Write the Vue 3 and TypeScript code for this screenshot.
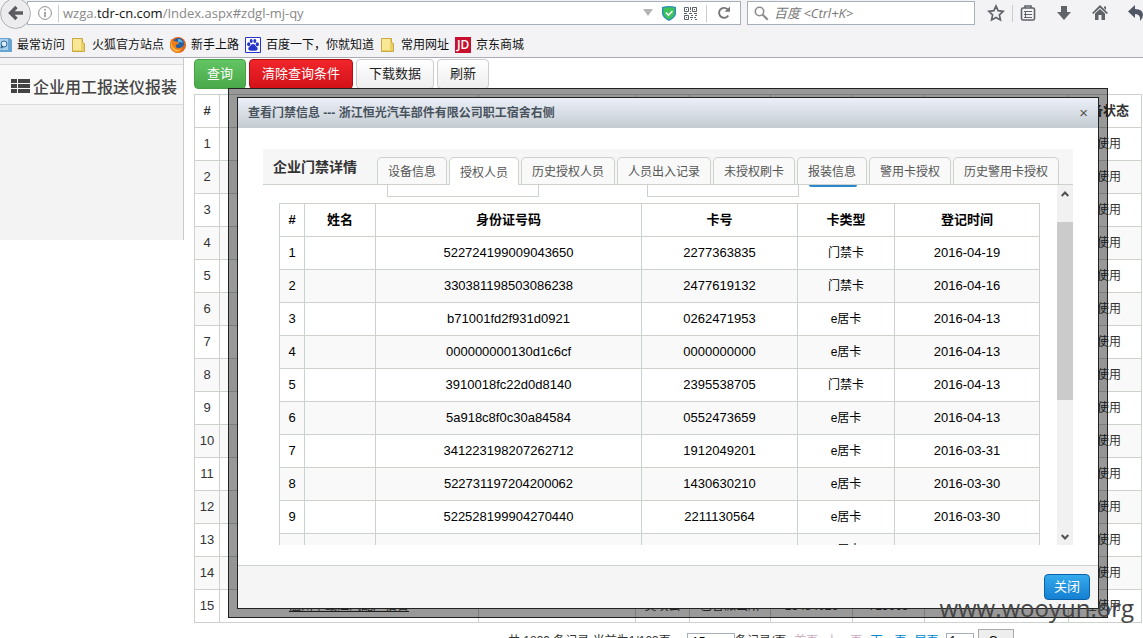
<script setup lang="ts">
interface Member {
  id: string
  card: string
  type: string
  date: string
}

const members: Member[] = [
  { id: '522724199009043650', card: '2277363835', type: '门禁卡', date: '2016-04-19' },
  { id: '330381198503086238', card: '2477619132', type: '门禁卡', date: '2016-04-16' },
  { id: 'b71001fd2f931d0921', card: '0262471953', type: 'e居卡', date: '2016-04-13' },
  { id: '000000000130d1c6cf', card: '0000000000', type: 'e居卡', date: '2016-04-13' },
  { id: '3910018fc22d0d8140', card: '2395538705', type: '门禁卡', date: '2016-04-13' },
  { id: '5a918c8f0c30a84584', card: '0552473659', type: 'e居卡', date: '2016-04-13' },
  { id: '341223198207262712', card: '1912049201', type: 'e居卡', date: '2016-03-31' },
  { id: '522731197204200062', card: '1430630210', type: 'e居卡', date: '2016-03-30' },
  { id: '522528199904270440', card: '2211130564', type: 'e居卡', date: '2016-03-30' },
  { id: '', card: '', type: 'e居卡', date: '' },
]

const tabs: string[] = ['设备信息', '授权人员', '历史授权人员', '人员出入记录', '未授权刷卡', '报装信息', '警用卡授权', '历史警用卡授权']
const activeTab = 1
const deviceRows = 15
</script>

<template>
  <div class="window">
    <header class="chrome">
      <div class="toolbar">
        <button class="back" aria-label="后退">
          <svg width="16" height="16" viewBox="0 0 16 16"><path d="M8.5 2 2.5 8l6 6M3 8h12" fill="none" stroke="#5c5c60" stroke-width="3.4" /></svg>
        </button>
        <div class="address">
          <svg class="info" width="16" height="16" viewBox="0 0 16 16"><circle cx="8" cy="8" r="6.4" fill="none" stroke="#8c8c8c" /><path d="M8 7v5M8 4v1.6" stroke="#8c8c8c" stroke-width="1.5" /></svg>
          <span class="sep"></span>
          <span class="url">wzga.<b>tdr-cn.com</b>/Index.aspx#zdgl-mj-qy</span>
          <svg class="drop" width="10" height="8" viewBox="0 0 10 8"><path d="M0 0h10L5 7z" fill="#b4b4b4" /></svg>
          <svg class="shield" width="14" height="15" viewBox="0 0 14 15"><path d="M0 1q7-2 14 0v7q-1 4-7 7-6-3-7-7z" fill="#2b8fb4" /><path d="M1.500 2q5.500-1.500 11 0v6q-1 3-5.500 5.500Q2.500 11 1.500 8z" fill="#3fc45c" /><path d="m4 6.500 2.500 2.700L10.500 5" fill="none" stroke="#fff" stroke-width="1.600" /></svg>
          <svg class="qr" width="15" height="15" viewBox="0 0 15 15" fill="none" stroke="#5c606a"><path d="M1.500 1.500h4v4h-4zM9.500 1.500h4v4h-4zM1.500 9.500h4v4h-4z" /><path d="M3 3.500h1M11 3.500h1M3 11.500h1M7.500 1v3M7 5.500h1M1 7.500h3M6 7.500h3M11 7.500h3M8 9.500h2M12 9.500h2M7 11.500h3M11 11.500h2M8 13.500h1M12 13.500h2" /></svg>
          <span class="sep reloadsep"></span>
          <svg class="reload" width="14" height="14" viewBox="0 0 14 14"><path d="M11.300 9.500A5 5 0 1 1 10.500 3.200" fill="none" stroke="#77777b" stroke-width="1.900" /><path d="M7.500 5.800H13V.5z" fill="#77777b" /></svg>
        </div>
        <label class="search">
          <svg width="15" height="15" viewBox="0 0 15 15" fill="none" stroke="#8c8c90"><circle cx="5.500" cy="5.500" r="4.200" stroke-width="1.600" /><path d="m8.700 8.700 5 5" stroke-width="2.200" /></svg>
          <input type="text" placeholder="百度 &lt;Ctrl+K&gt;" aria-label="搜索" />
        </label>
        <nav class="tools">
          <svg width="18" height="18" viewBox="0 0 18 18"><path d="m9 2 2.100 4.700 5.100.6-3.800 3.500 1 5.100L9 13.400l-4.400 2.500 1-5.100-3.800-3.500 5.100-.6z" fill="none" stroke="#606368" stroke-width="1.700" /></svg>
          <span class="sep"></span>
          <svg width="18" height="18" viewBox="0 0 18 18" fill="none" stroke="#606368"><rect x="2.500" y="4" width="13" height="12" rx="1.500" stroke-width="1.600" /><path d="M6 4V2h6v2" stroke-width="1.600" /><path d="M5 7.500h8M5 10.500h8M5 13.500h8M6.500 7v7" /></svg>
          <svg width="18" height="18" viewBox="0 0 18 18"><path d="M6 2h6v6h4l-7 8-7-8h4z" fill="#606368" /></svg>
          <svg width="18" height="18" viewBox="0 0 18 18" fill="#606368"><path d="m9 1 8 8-1.300 1L9 3.800 2.300 10 1 9z" /><path d="M13 2.500h2V6l-2-2zM4 9.500 9 5l5 4.500V16h-3.500v-5h-3v5H4z" /></svg>
          <svg width="18" height="18" viewBox="0 0 18 18"><path d="M8 1v4q8 0 8 6 0 3-3 6 1-7-5-7v4L1 7.500z" fill="#505664" /></svg>
        </nav>
      </div>
      <nav class="bookmarks">
        <a href="#"><svg class="recent" width="12" height="16" viewBox="0 0 12 16"><path d="M0 1h10l2 2v12H0z" fill="#67a4d2" /><path d="M0 2h8v11H0z" fill="#a6d1ed" /><circle cx="4" cy="7" r="3" fill="#d8effb" stroke="#33668e" /><path d="m1 11 2-2" stroke="#33668e" stroke-width="2" /></svg>最常访问</a>
        <a href="#"><svg width="16" height="16" viewBox="0 0 16 16"><path d="M1.500 1.500h10v4l2 1v8h-12z" fill="#e9cf66" stroke="#c9a944" /><path d="M2 2h8v11H2z" fill="#f8e795" /></svg>火狐官方站点</a>
        <a href="#"><svg width="16" height="16" viewBox="0 0 16 16"><circle cx="8" cy="8" r="8" fill="#dd641c" /><circle cx="8.500" cy="6.500" r="5.500" fill="#245ea5" /><path d="M8 2q4 0 5 4-3-2-5 0z" fill="#59b7e3" /><path d="M1 2q1 2 3 2 4 0 5 3-4 0-3 3 3 3 7-1-1 7-6 7Q0 14 0 8z" fill="#ed7c1b" /><path d="M1 4q1 8 7 9l3-1q-2 4-7 2Q0 10 1 4z" fill="#f9b83a" /></svg>新手上路</a>
        <a href="#"><svg width="16" height="16" viewBox="0 0 16 16"><path d="M.5.5h15v15H.5z" fill="#fff" stroke="#2633c8" /><g fill="#2633c8"><ellipse cx="3.700" cy="7.300" rx="1.600" ry="2" /><ellipse cx="6.200" cy="4" rx="1.500" ry="2.100" /><ellipse cx="9.800" cy="4" rx="1.500" ry="2.100" /><ellipse cx="12.300" cy="7.300" rx="1.600" ry="2" /><path d="M8 7q2 0 2.700 2 2.300 1.500 2 3.200-.7 2-4.700 1.500-4 .5-4.700-1.500-.3-1.700 2-3.200Q6 7 8 7z" /></g></svg>百度一下，你就知道</a>
        <a href="#"><svg width="16" height="16" viewBox="0 0 16 16"><path d="M1.500 1.500h10v4l2 1v8h-12z" fill="#e9cf66" stroke="#c9a944" /><path d="M2 2h8v11H2z" fill="#f8e795" /></svg>常用网址</a>
        <a href="#"><span class="jd">JD</span>京东商城</a>
      </nav>
    </header>

    <div class="page">
      <aside class="sidebar">
        <a class="side-item" href="#">
          <svg width="20" height="14" viewBox="0 0 20 14" fill="#444"><path d="M0 0h6v4H0zM7 0h12v4H7zM0 5h6v4H0zM7 5h12v4H7zM0 10h6v4H0zM7 10h12v4H7z" /></svg>
          <span>企业用工报送仪报装</span>
        </a>
      </aside>
      <main class="content">
        <div class="actions">
          <button class="btn green">查询</button>
          <button class="btn red">清除查询条件</button>
          <button class="btn">下载数据</button>
          <button class="btn">刷新</button>
        </div>
        <table class="grid devices">
          <colgroup><col class="d-no" /><col class="d-name" /><col class="d-addr" /><col class="d-user" /><col class="d-station" /><col class="d-tel" /><col class="d-short" /><col /><col class="d-state" /></colgroup>
          <thead><tr><th>#</th><th></th><th></th><th></th><th></th><th></th><th></th><th></th><th class="state">设备状态</th></tr></thead>
          <tbody>
            <tr v-for="n in deviceRows" :key="n">
              <td>{{ n }}</td>
              <td><a v-if="n === deviceRows" class="device" href="#">温州市瓯江汽配厂宿舍</a></td>
              <td></td>
              <td><span v-if="n === deviceRows">吴瑛云</span></td>
              <td><span v-if="n === deviceRows">巴曹派出所</span></td>
              <td><span v-if="n === deviceRows">13484026</span></td>
              <td><span v-if="n === deviceRows">713668</span></td>
              <td></td>
              <td class="state">在使用</td>
            </tr>
          </tbody>
        </table>
        <div class="pager">
          <span class="total">共 1839 条记录 当前为1/123页</span>
          <label class="size"><select aria-label="每页记录数"><option>15</option></select>条记录/页</label>
          <a class="off" href="#">首页</a>
          <a class="off" href="#">上一页</a>
          <a href="#">下一页</a>
          <a href="#">尾页</a>
          <span class="jump"><input type="text" value="1" aria-label="页码" /><button>Go</button></span>
        </div>
      </main>
    </div>

    <div class="frame" role="dialog" aria-labelledby="dialog-title">
      <section class="dialog">
        <header class="dialog-head">
          <h1 id="dialog-title">查看门禁信息 --- 浙江恒光汽车部件有限公司职工宿舍右侧</h1>
          <button class="close" aria-label="关闭窗口">×</button>
        </header>
        <div class="dialog-body">
          <div class="tabbar">
            <h2>企业门禁详情</h2>
            <div class="tabs" role="tablist">
              <button v-for="(tab, i) in tabs" :key="tab" class="tab" :class="{ active: i === activeTab }" role="tab" :aria-selected="i === activeTab">{{ tab }}</button>
            </div>
          </div>
          <div class="pane">
            <div class="pane-main">
              <form class="filters">
                <input type="text" aria-label="姓名" />
                <input type="text" aria-label="卡号" />
                <button type="button" aria-label="查询人员"></button>
              </form>
              <table class="grid members">
                <colgroup><col class="m-no" /><col class="m-name" /><col class="m-id" /><col class="m-card" /><col class="m-type" /><col class="m-date" /></colgroup>
                <thead><tr><th>#</th><th>姓名</th><th>身份证号码</th><th>卡号</th><th>卡类型</th><th>登记时间</th></tr></thead>
                <tbody>
                  <tr v-for="(m, i) in members" :key="i">
                    <td>{{ i < 9 ? i + 1 : '' }}</td>
                    <td></td>
                    <td>{{ m.id }}</td>
                    <td>{{ m.card }}</td>
                    <td class="type">{{ m.type }}</td>
                    <td>{{ m.date }}</td>
                  </tr>
                </tbody>
              </table>
            </div>
            <div class="scrollbar">
              <svg width="8" height="6" viewBox="0 0 8 6"><path d="m.7 5 3.300-3.500L7.300 5" fill="none" stroke="#505050" stroke-width="2" /></svg>
              <div class="thumb"></div>
              <svg width="8" height="6" viewBox="0 0 8 6"><path d="M.7 1 4 4.500 7.300 1" fill="none" stroke="#505050" stroke-width="2" /></svg>
            </div>
          </div>
        </div>
        <footer class="dialog-foot"><button class="btn blue">关闭</button></footer>
      </section>
    </div>
    <div class="watermark">www.wooyun.org</div>
  </div>
</template>

<style>
body {
  margin: 0;
}
</style>

<style scoped>
* {
  box-sizing: border-box;
}
.window {
  position: relative;
  height: 100vh;
  overflow: hidden;
  background: #fff;
  color: #333;
  font: 13px/20px "Liberation Sans", "Noto Sans CJK SC", sans-serif;
}
button,
input,
select {
  font: inherit;
}
a {
  color: inherit;
  text-decoration: none;
}
svg {
  flex: none;
}
.chrome {
  height: 58px;
  border-bottom: 1px solid #a9abb0;
  background: #f3f3f5;
}
.toolbar {
  display: flex;
  height: 26px;
  align-items: center;
}
.back {
  display: grid;
  width: 31px;
  height: 31px;
  flex: none;
  place-items: center;
  padding: 0;
  border: 1px solid #b0b0b4;
  border-radius: 50%;
  background: #ececee;
  z-index: 1;
}
.address {
  display: flex;
  height: 24px;
  flex: 1;
  align-items: center;
  margin-left: -4px;
  padding: 0 9px;
  border: 1px solid #a8b0bc;
  background: #fff;
}
.sep {
  width: 1px;
  height: 17px;
  flex: none;
  background: #ccc;
}
.address .sep {
  margin: 0 4px 0 5px;
}
.url {
  flex: 1;
  font: 13px/20px "Open Sans", "Noto Sans", sans-serif;
  color: #888;
}
.url b {
  font-weight: 400;
  color: #111;
}
.drop {
  margin-right: 2px;
}
.shield {
  margin: 0 7px;
}
.address .reloadsep {
  margin: 0 10px 0 8px;
}
.search {
  display: flex;
  width: 228px;
  height: 24px;
  flex: none;
  align-items: center;
  gap: 5px;
  margin-left: 6px;
  padding: 0 6px;
  border: 1px solid #a8b0bc;
  background: #fff;
}
.search input {
  min-width: 0;
  flex: 1;
  padding: 0;
  border: 0;
  outline: 0;
  background: none;
  font: italic 13px/18px "Open Sans", "Noto Sans CJK SC", sans-serif;
}
.search input::placeholder {
  color: #777;
  opacity: 1;
}
.tools {
  display: flex;
  width: 168px;
  flex: none;
  align-items: center;
  gap: 18px;
  padding-left: 12px;
}
.tools .sep {
  margin: 0 -12px 0 -11px;
}
.bookmarks {
  display: flex;
  height: 38px;
  align-items: center;
  gap: 6px;
  font-size: 12px;
  color: #111;
}
.bookmarks a {
  display: flex;
  align-items: center;
  gap: 5px;
  white-space: nowrap;
}
.jd {
  width: 16px;
  height: 16px;
  background: #c8102e;
  color: #fff;
  font: 600 12px/16px "Open Sans", sans-serif;
  text-align: center;
}
.page {
  display: flex;
  align-items: flex-start;
}
.sidebar {
  width: 184px;
  height: 182px;
  flex: none;
  padding-top: 6px;
  border-right: 1px solid #ccc;
  background: #f3f3f3;
}
.side-item {
  display: flex;
  height: 41px;
  align-items: center;
  gap: 2px;
  padding: 3px 0 0 11px;
  border: solid #dcdcdc;
  border-width: 1px 0;
  background: #f9f9f9;
  color: #444;
  font-size: 16px;
  font-weight: 500;
  white-space: nowrap;
}
.side-item span {
  padding-top: 3px;
}
.content {
  min-width: 0;
  flex: 1;
  margin-left: 10px;
  padding-top: 1px;
}
.actions {
  display: flex;
  gap: 3px;
}
.btn {
  height: 30px;
  padding: 0 12px;
  border: 1px solid #ccc;
  border-radius: 4px;
  background: linear-gradient(#fff, #eee);
  color: #222;
}
.green {
  border-color: #46a246;
  background: linear-gradient(#62c462, #4aa94a);
  color: #fff;
}
.red {
  border-color: #a11;
  background: linear-gradient(#f0262c, #d41118);
  color: #fff;
}
.blue {
  height: 26px;
  padding: 0 9px;
  border-color: #0a62a8;
  background: linear-gradient(#35aaec, #1480d2);
  color: #fff;
}
.grid {
  border-collapse: collapse;
  table-layout: fixed;
}
.grid th,
.grid td {
  height: 33px;
  padding: 0;
  border: 1px solid #ccd2cc;
  text-align: center;
  white-space: nowrap;
}
.grid tbody tr:nth-child(even) {
  background: #f9f9f9;
}
.devices {
  width: calc(100% - 1px);
  margin-top: 5px;
}
.d-no {
  width: 25px;
}
.d-name {
  width: 259px;
}
.d-addr {
  width: 157px;
}
.d-user {
  width: 54px;
}
.d-station {
  width: 81px;
}
.d-tel {
  width: 82px;
}
.d-short {
  width: 72px;
}
.d-state {
  width: 73px;
}
.devices span,
.device,
.devices td.state {
  font-size: 12px;
}
.device {
  text-decoration: underline;
}
.devices .state {
  padding-right: 12px;
  text-align: right;
}
.devices td.state {
  padding-right: 20px;
}
.pager {
  display: flex;
  align-items: center;
  gap: 8px;
  margin: 6px 0 0 314px;
  font-size: 12px;
  white-space: nowrap;
}
.pager a {
  color: #08c;
}
.pager .off {
  color: #c9a9bd;
}
.total {
  min-width: 171px;
}
.size,
.jump {
  display: flex;
  align-items: center;
}
.jump {
  gap: 4px;
}
.pager select {
  width: 48px;
  height: 16px;
  border: 1px solid #a8b0bc;
  background: #fff;
  line-height: 14px;
}
.pager input {
  width: 28px;
  height: 16px;
  border: 1px solid #a8b0bc;
}
.pager button {
  width: 36px;
  height: 24px;
  border: 1px solid #aaa;
  background: #eee;
}
.frame {
  position: absolute;
  inset: 88px 35px 20px 228px;
  padding: 8px;
  border: 1px solid #222;
  background: rgba(0, 0, 0, 0.4);
}
.dialog {
  display: flex;
  height: 100%;
  flex-direction: column;
  border: 1px solid #222;
  background: #fff;
}
.dialog-head {
  display: flex;
  height: 30px;
  flex: none;
  align-items: center;
  justify-content: space-between;
  padding: 0 10px;
  background: linear-gradient(#eceff8, #c4ccd1);
}
h1,
h2 {
  margin: 0;
  font-weight: 700;
}
h1 {
  color: #47525c;
  font-size: 12px;
}
.close {
  padding: 0;
  border: 0;
  background: none;
  color: #555;
  font-size: 15px;
}
.dialog-body {
  min-height: 0;
  flex: 1;
  padding: 21px 25px 20px;
}
.tabbar {
  display: flex;
  height: 36px;
  padding: 0 10px;
  border-bottom: 1px solid #ccd2cc;
  background: #f6f6f6;
}
h2 {
  width: 104px;
  flex: none;
  font-size: 14px;
  line-height: 36px;
}
.tabs {
  display: flex;
  align-items: flex-end;
  gap: 2px;
}
.tab {
  height: 27px;
  padding: 2px 10px 0;
  border: 1px solid #ccd2cc;
  border-bottom: 0;
  border-radius: 5px 5px 0 0;
  background: #f9f9f9;
  color: #555;
  font-size: 12px;
  white-space: nowrap;
}
.tab.active {
  height: 28px;
  margin-bottom: -1px;
  background: #fff;
}
.pane {
  display: flex;
  height: calc(100% - 36px);
}
.pane-main {
  flex: 1;
  overflow: hidden;
  padding: 0 17px 0 16px;
}
.filters {
  display: flex;
  height: 12px;
  align-items: flex-end;
  margin: 0 0 6px 108px;
}
.filters input {
  width: 152px;
  height: 13px;
  margin-right: 108px;
  border: 1px solid #ccd2cc;
  border-top: 0;
}
.filters input + input {
  margin-right: 10px;
}
.filters button {
  width: 48px;
  height: 2px;
  align-self: flex-start;
  padding: 0;
  border: 0;
  border-radius: 0 0 3px 3px;
  background: #2a86cf;
}
.members {
  width: 100%;
  color: #000;
}
.m-no {
  width: 25px;
}
.m-name {
  width: 71px;
}
.m-id {
  width: 266px;
}
.m-card {
  width: 156px;
}
.m-type {
  width: 97px;
}
.members .type {
  font-size: 12px;
}
.scrollbar {
  display: flex;
  width: 16px;
  flex-direction: column;
  align-items: center;
  padding: 6px 0 5px;
  background: #f1f1f1;
}
.thumb {
  width: 100%;
  height: 51%;
  margin: 25px 0 auto;
  background: #cbcbcb;
}
.dialog-foot {
  display: flex;
  height: 43px;
  flex: none;
  align-items: center;
  justify-content: flex-end;
  padding: 0 8px;
  border-top: 1px solid #ccd2cc;
  background: #f5f5f5;
}
.watermark {
  position: absolute;
  right: 9px;
  bottom: 12px;
  color: #444;
  font: 24px/36px "Open Sans", "Noto Sans", sans-serif;
}
</style>
